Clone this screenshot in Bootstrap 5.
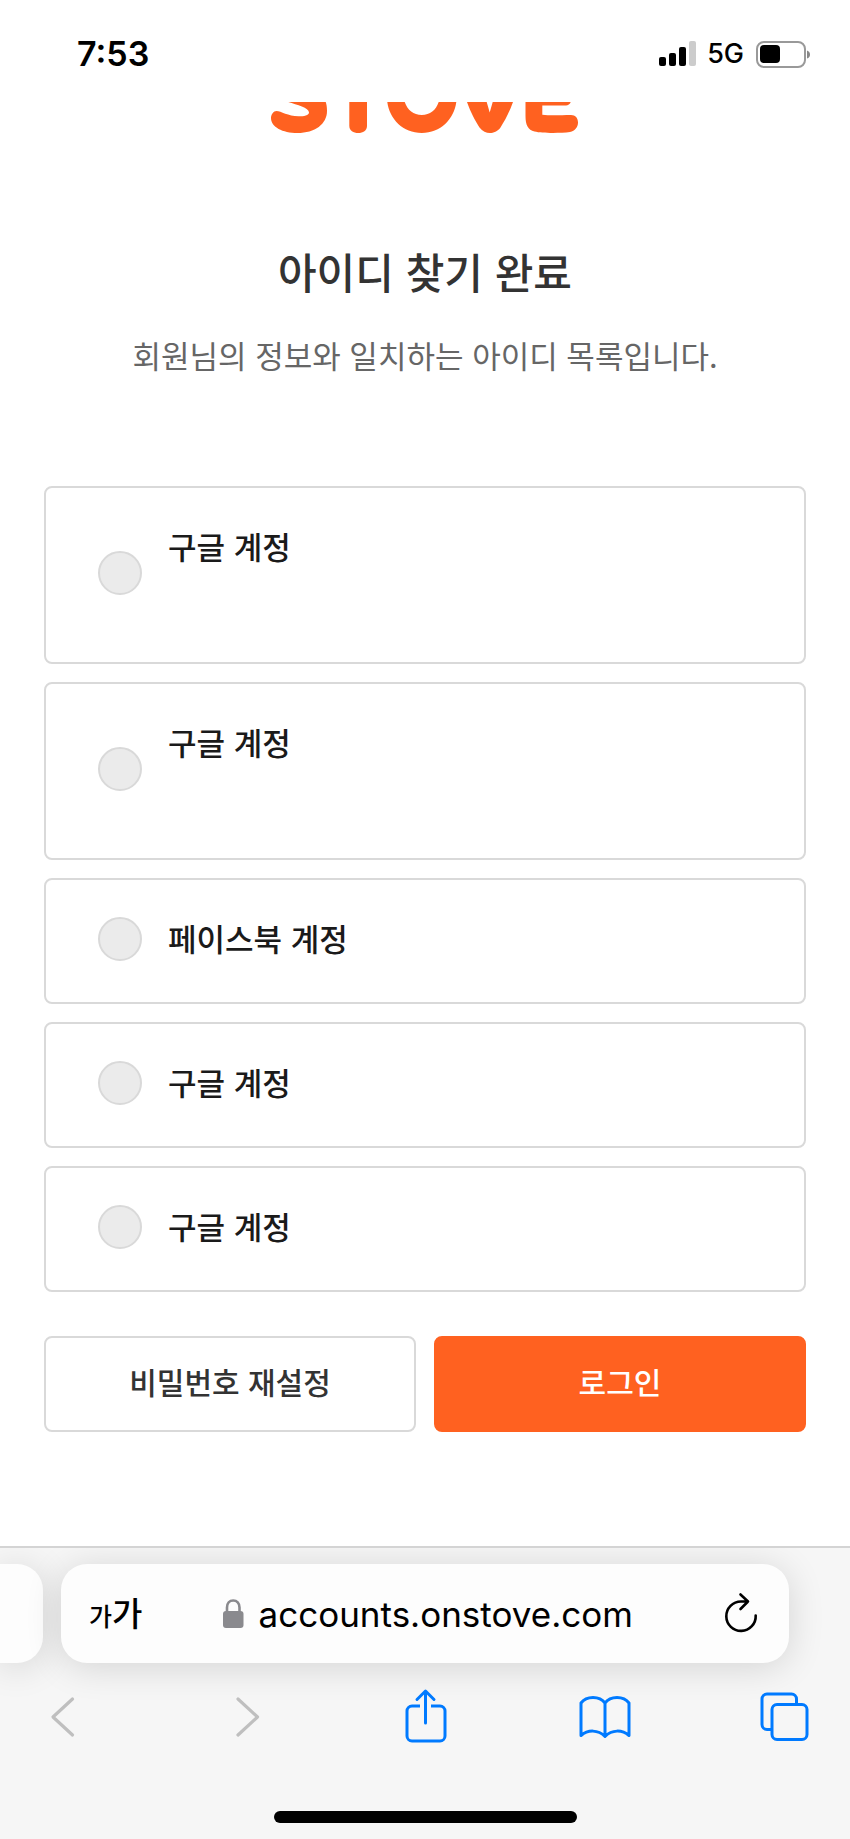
<!DOCTYPE html>
<html lang="ko">
<head>
<meta charset="utf-8">
<meta name="viewport" content="width=device-width, initial-scale=1">
<title>아이디 찾기 완료</title>
<link rel="stylesheet" href="https://cdn.jsdelivr.net/npm/bootstrap@5.3.0/dist/css/bootstrap.min.css">
<style>
  body { font-family: Inter, "Noto Sans CJK KR", sans-serif; color: #1a1a1a; background: #fff; }
  svg { display: block; flex: none; }
  .kr { font-family: "Noto Sans CJK KR", sans-serif; }

  .status-bar { height: 102px; padding: 6px 40px 0 77px; color: #000; }
  .clock { font-size: 34px; font-weight: 600; line-height: 40px; }
  .network { font-size: 27px; font-weight: 500; line-height: 32px; margin: 0 12px 0 10px; }

  .page-body { padding: 0 44px 48px; }
  .title { font-size: 42px; font-weight: 500; line-height: 64px; color: #333; margin: 104px 0 0; }
  .subtitle { font-size: 31px; line-height: 48px; color: #666; margin: 28px 0 107px; }

  .account-list { gap: 18px; }
  .account { border: 2px solid #d9d9d9; border-radius: 8px; padding: 32px 52px 38px; gap: 26px; cursor: pointer; }
  .account input { appearance: none; flex: none; width: 44px; height: 44px; margin: 2px 0 0; border: 2px solid #d9d9d9; border-radius: 50%; background: #ebebeb; }
  .account input:checked { border: 12px solid #ff6120; background: #fff; }
  .account-name { font-size: 31px; font-weight: 500; line-height: 52px; }
  .account-name.two-line { min-height: 104px; }

  .actions { gap: 18px; margin-top: 44px; }
  .actions .btn { --bs-btn-border-width: 2px; --bs-btn-border-radius: 8px; height: 96px; font-size: 30px; font-weight: 500; padding: 0 0 5px; }
  .btn-reset { --bs-btn-color: #333; --bs-btn-border-color: #d9d9d9; --bs-btn-hover-border-color: #bbb; }
  .btn-login { --bs-btn-color: #fff; --bs-btn-bg: #ff6120; --bs-btn-border-color: #ff6120; --bs-btn-hover-color: #fff; --bs-btn-hover-bg: #ec5414; }

  .browser-bar { background: #f6f6f6; border-top: 2px solid #d4d4d4; padding-bottom: 16px; overflow: hidden; }
  .tab-strip { gap: 18px; padding: 16px 61px 0 0; }
  .tab-edge, .address { height: 99px; background: #fdfdfd; box-shadow: 0 4px 36px rgba(0, 0, 0, .14); }
  .tab-edge { width: 43px; border-radius: 0 26px 26px 0; }
  .address { border-radius: 26px; padding: 0 28px; color: #000; }
  .address button, .tools button { border: 0; padding: 0; background: none; color: inherit; }
  .text-small { font-size: 25px; }
  .text-size { font-size: 33px; font-weight: 500; line-height: 48px; }
  .url { font-size: 35px; line-height: 44px; gap: 15px; margin-right: 8px; color: #000; }
  .tools { padding: 24px 36px 0 33px; color: #007aff; }
  .tools .dim { color: #bfbfbf; }
  .home-indicator { width: 303px; height: 12px; border-radius: 6px; background: #000; margin: 64px auto 0; }
</style>
</head>
<body>
<div class="d-flex flex-column min-vh-100">

  <header class="status-bar d-flex align-items-center justify-content-between">
    <span class="clock">7:53</span>
    <div class="d-flex align-items-center">
      <svg width="38" height="26" viewBox="0 0 38 26" aria-hidden="true">
        <rect x="0" y="16" width="7" height="9" rx="2"/>
        <rect x="10" y="12" width="7" height="13" rx="2"/>
        <rect x="20" y="6" width="7" height="19" rx="2"/>
        <rect x="30" y="0" width="7" height="25" rx="2" fill="#ccc"/>
      </svg>
      <span class="network">5G</span>
      <svg width="54" height="27" viewBox="0 0 54 27" aria-hidden="true">
        <rect x="1" y="1" width="48" height="25" rx="7" fill="none" stroke="#999" stroke-width="2"/>
        <rect x="4" y="4" width="20" height="18" rx="4"/>
        <path d="M51 9.500q3 1 3 4t-3 4z" fill="#888"/>
      </svg>
    </div>
  </header>

  <main class="page-body">
    <!-- Brand logo, scrolled half under the status bar -->
    <svg class="mx-auto" width="310" height="33" viewBox="0 0 310 33" fill="#ff6120" role="img" aria-label="STOVE">
      <path d="M18.300 0C27 3 39 5.500 39 10.500 39 13.500 34 14.300 28.500 14.300 18 14.300 11 9 6.500 9 3.500 9 1 12.500 1 16 1 25 12.500 31 27.500 31 45 31 57 22 57 9 57 5 56.500 2 55.700 0z"/>
      <path d="M79.300 0H97V24C97 28.500 93 31 88.200 31S79.300 28.500 79.300 24z"/>
      <path d="M117.300 0C119.500 17 133 31 151.800 31S184 17 186.300 0H168.700C166 8 160 13 151.800 13S137.500 8 134.700 0z"/>
      <path d="M197 0H216.700L219.700 10.500 222.700 0H243C239 11 235 18.500 230.500 25.500 227.500 29.500 223.500 31 219.900 31S212.500 29.500 209.500 25.500C205 18.500 201 11 197 0z"/>
      <path d="M255.500 0H300.700C300 2 298 3.500 296 3.500H272.300V12.700C280 13.800 290 13.200 301 13 305.500 13 308 16 308 20.500S305 29 300 30C290 31.300 272 31.300 264.500 29.500 258 28 255.500 23 255.500 14z"/>
    </svg>

    <h1 class="title kr text-center">아이디 찾기 완료</h1>
    <p class="subtitle kr text-center">회원님의 정보와 일치하는 아이디 목록입니다.</p>

    <form>
      <div class="account-list kr d-flex flex-column">
        <label class="account d-flex align-items-center"><input type="radio" name="account"><span class="account-name two-line">구글 계정</span></label>
        <label class="account d-flex align-items-center"><input type="radio" name="account"><span class="account-name two-line">구글 계정</span></label>
        <label class="account d-flex align-items-center"><input type="radio" name="account"><span class="account-name">페이스북 계정</span></label>
        <label class="account d-flex align-items-center"><input type="radio" name="account"><span class="account-name">구글 계정</span></label>
        <label class="account d-flex align-items-center"><input type="radio" name="account"><span class="account-name">구글 계정</span></label>
      </div>
      <div class="actions kr d-flex">
        <button type="button" class="btn btn-reset w-100">비밀번호 재설정</button>
        <button type="submit" class="btn btn-login w-100">로그인</button>
      </div>
    </form>
  </main>

  <footer class="browser-bar mt-auto">
    <div class="tab-strip d-flex">
      <div class="tab-edge flex-shrink-0"></div>
      <div class="address d-flex align-items-center justify-content-between flex-grow-1">
        <button type="button" class="text-size kr"><span class="text-small">가</span>가</button>
        <a href="#" class="url d-flex align-items-center text-decoration-none">
          <svg width="21" height="30" viewBox="0 0 21 30" aria-hidden="true">
            <path d="M4 13V8.500C4 4 6.500 1.500 10.200 1.500S16.500 4 16.500 8.500V13" fill="none" stroke="#8a8a8e" stroke-width="2.600"/>
            <rect x="0" y="12" width="20.500" height="17" rx="3" fill="#8a8a8e"/>
          </svg>
          <span>accounts.onstove.com</span>
        </a>
        <button type="button" aria-label="새로고침">
          <svg width="40" height="44" viewBox="0 0 40 44" fill="none" stroke="#000" stroke-width="2.600" stroke-linecap="round" stroke-linejoin="round">
            <path d="M34.700 23.500A14.700 14.700 0 1 1 20 9.500h7M19.500 2.500l7.500 7-7.500 7.500"/>
          </svg>
        </button>
      </div>
    </div>

    <nav class="tools d-flex justify-content-between" aria-label="브라우저 도구">
      <button type="button" class="dim" aria-label="뒤로">
        <svg width="60" height="60" viewBox="0 0 60 60" fill="none" stroke="currentColor" stroke-width="3.200" stroke-linecap="round" stroke-linejoin="round"><path d="M39.500 12 20 30l19.500 18"/></svg>
      </button>
      <button type="button" class="dim" aria-label="앞으로">
        <svg width="60" height="60" viewBox="0 0 60 60" fill="none" stroke="currentColor" stroke-width="3.200" stroke-linecap="round" stroke-linejoin="round"><path d="M25 12l19.500 18L25 48"/></svg>
      </button>
      <button type="button" aria-label="공유">
        <svg width="60" height="60" viewBox="0 0 60 60" fill="none" stroke="currentColor" stroke-width="3" stroke-linecap="round" stroke-linejoin="round"><path d="M31.500 36V4M23 12.500 31.500 4l8.500 8.500"/><path stroke-linecap="butt" d="M26 19h-8a5 5 0 0 0-5 5v25a5 5 0 0 0 5 5h28a5 5 0 0 0 5-5V24a5 5 0 0 0-5-5H37"/></svg>
      </button>
      <button type="button" aria-label="책갈피">
        <svg width="60" height="60" viewBox="0 0 60 60" fill="none" stroke="currentColor" stroke-width="3" stroke-linecap="round" stroke-linejoin="round"><path d="M31 16C25.500 8.500 12.500 8.500 7 16v32.500c7-6 17-6 24 1 7-7 17-7 24-1V16C49.500 8.500 36.500 8.500 31 16zv33"/></svg>
      </button>
      <button type="button" aria-label="탭">
        <svg width="60" height="60" viewBox="0 0 60 60" fill="none" stroke="currentColor" stroke-width="3" stroke-linejoin="round"><rect x="18" y="17.500" width="35" height="35" rx="5"/><path d="M18 42.500h-5a5 5 0 0 1-5-5V12a5 5 0 0 1 5-5h24.500a5 5 0 0 1 5 5v5.500"/></svg>
      </button>
    </nav>
    <div class="home-indicator"></div>
  </footer>

</div>
<script src="https://cdn.jsdelivr.net/npm/bootstrap@5.3.0/dist/js/bootstrap.bundle.min.js"></script>
</body>
</html>
